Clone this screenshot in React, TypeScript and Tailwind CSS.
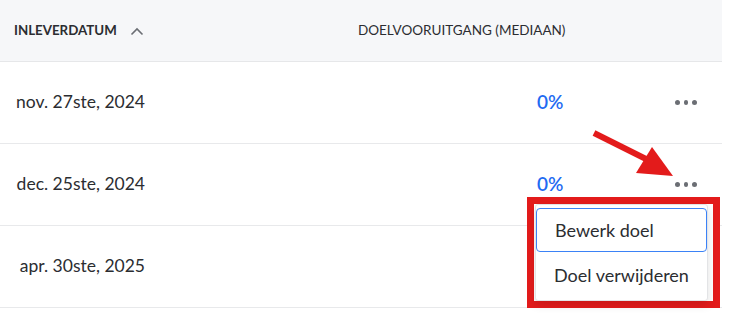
import React from "react";

const rows = [
  { date: "nov. 27ste, 2024", pct: "0%" },
  { date: "dec. 25ste, 2024", pct: "0%" },
  { date: "apr. 30ste, 2025", pct: "0%" },
];

function Dots() {
  return (
    <div className="flex items-center gap-[4px]">
      <span className="w-[4.5px] h-[4.5px] rounded-full bg-[#6b6e74]" />
      <span className="w-[4.5px] h-[4.5px] rounded-full bg-[#6b6e74]" />
      <span className="w-[4.5px] h-[4.5px] rounded-full bg-[#6b6e74]" />
    </div>
  );
}

export default function App() {
  return (
    <div
      className="relative w-[731px] h-[327px] bg-white overflow-hidden text-[#2b2d31]"
      style={{ fontFamily: "Lato, 'Noto Sans', sans-serif" }}
    >
      <div className="w-[722px]">
        <div className="h-[62px] bg-[#f6f7f9] border-b border-[#e6e7e9] flex items-center">
          <div className="w-[358px] pl-[14px] flex items-center gap-[13px]">
            <span className="text-[13.3px] font-bold">INLEVERDATUM</span>
            <svg width="14" height="9" viewBox="0 0 14 9" className="mt-[1px]">
              <path d="M1.5 7.5 L7 2 L12.5 7.5" fill="none" stroke="#6b6e74" strokeWidth="1.6" />
            </svg>
          </div>
          <span className="text-[13.5px]">DOELVOORUITGANG (MEDIAAN)</span>
        </div>
        {rows.map((r, i) => (
          <div key={i} className="h-[82px] border-b border-[#e8e9eb] flex items-center">
            <div className="w-[145px] text-right text-[17.5px]">{r.date}</div>
            <div className="w-[392px]" />
            <div className="w-[138px] text-[19px] font-semibold text-[#1f6bf2]">{r.pct}</div>
            <Dots />
          </div>
        ))}
      </div>

      {/* red arrow */}
      <svg className="absolute left-0 top-0" width="731" height="327" viewBox="0 0 731 327">
        <line x1="594" y1="133" x2="648" y2="160" stroke="#e31b1b" strokeWidth="6" />
        <polygon points="652,147 673,176 636,173" fill="#e31b1b" />
      </svg>

      {/* dropdown with red highlight */}
      <div className="absolute left-[527px] top-[197px] w-[193px] h-[111px] border-[7px] border-[#e31b1b] bg-white">
        <div className="ml-[1px] w-[173px] h-[97px] rounded-[3px] border border-[#e3e4e6] bg-white shadow-[0_4px_10px_rgba(0,0,0,0.12)] pt-[3px] flex flex-col">
          <div className="h-[44px] rounded-[4px] border-[1.5px] border-[#3b82f6] flex items-center pl-[18px] text-[18px] text-[#2b2d31]">
            Bewerk doel
          </div>
          <div className="h-[46px] flex items-center pl-[18px] text-[18px] text-[#2b2d31]">
            Doel verwijderen
          </div>
        </div>
      </div>
    </div>
  );
}
